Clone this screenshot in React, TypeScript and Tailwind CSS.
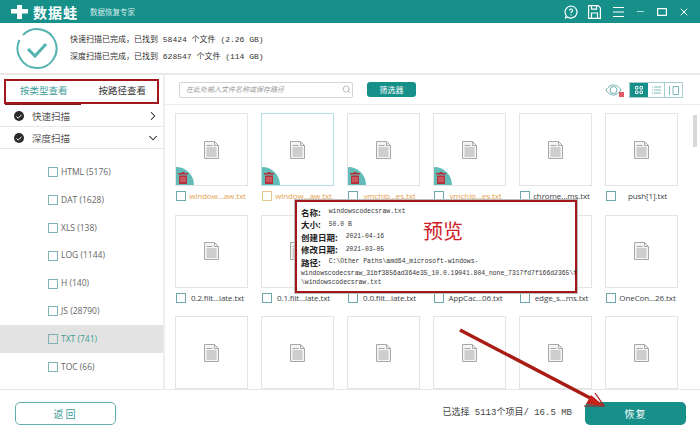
import { ChevronDown, ChevronRight, Minus, Search, X } from "lucide-react";

const cjk = "font-['Noto_Sans_CJK_SC',sans-serif]";
const mono = "font-['Liberation_Mono','Noto_Sans_CJK_SC',monospace]";

const fileTypes = ["HTML (5176)", "DAT (1628)", "XLS (138)", "LOG (1144)", "H (140)", "JS (28790)", "TXT (741)", "TOC (66)"];

const files = [
  { name: "window...aw.txt", deleted: true, selected: false },
  { name: "window...aw.txt", deleted: true, selected: true },
  { name: "vmchip...es.txt", deleted: true, selected: false },
  { name: "vmchip...es.txt", deleted: true, selected: false },
  { name: "chrome...ms.txt", deleted: false, selected: false },
  { name: "push[1].txt", deleted: false, selected: false },
  { name: "0.2.filt...iate.txt", deleted: false, selected: false },
  { name: "0.1.filt...iate.txt", deleted: false, selected: false },
  { name: "0.0.filt...iate.txt", deleted: false, selected: false },
  { name: "AppCac...06.txt", deleted: false, selected: false },
  { name: "edge_s...ms.txt", deleted: false, selected: false },
  { name: "OneCon...26.txt", deleted: false, selected: false },
  { name: "", deleted: false, selected: false },
  { name: "", deleted: false, selected: false },
  { name: "", deleted: false, selected: false },
  { name: "", deleted: false, selected: false },
  { name: "", deleted: false, selected: false },
  { name: "", deleted: false, selected: false },
];

function DocIcon() {
  return (
    <svg width="15" height="18" viewBox="0 0 15 18" fill="none" stroke="#a8a8a8">
      <path d="M.5.5h10l4 4v13H.5z" fill="#f4f4f4" />
      <path d="M10.5.5v4h4M2.500 4.500h6M2.500 7h10M2.500 9h10M2.500 11h10M2.500 13h10M2.500 15h10" />
    </svg>
  );
}

function TrashBadge() {
  return (
    <div className="absolute bottom-0 left-0 w-[18px] h-[18px] bg-[#62bdb9] rounded-tr-[18px] flex items-end pl-[2px] pb-[1px]">
      <svg width="10" height="12" viewBox="0 0 10 12" fill="#b5323c">
        <path d="M3.500 0h3v1H10v1.500H0V1h3.500zM1 3.500h8V12H1z" />
        <path d="M3 5v5M5 5v5M7 5v5" stroke="#e9a2a2" strokeWidth=".7" />
      </svg>
    </div>
  );
}

function FileCard({ name, deleted, selected }: { name: string; deleted: boolean; selected: boolean }) {
  return (
    <div className="w-[73px] shrink-0">
      <div className={`relative h-[73px] bg-white border flex items-center justify-center ${selected ? "border-[#b5dfe0]" : "border-[#e4e4e4]"}`}>
        <DocIcon />
        {deleted && <TrashBadge />}
      </div>
      <div className="flex items-center h-[14px] mt-[3px] whitespace-nowrap pl-[1px]">
        <span className={`w-[10px] h-[10px] border shrink-0 ${selected ? "border-[#e6c88c]" : "border-[#6ea8ad]"}`} />
        <span className={`flex-1 ml-[1px] text-center font-['Open_Sans',sans-serif] text-[8px] tracking-[-0.1px] ${deleted ? "text-[#e3a251]" : "text-[#3c4448]"}`}>{name}</span>
      </div>
    </div>
  );
}

function HeaderBar() {
  return (
    <header className="h-[23px] bg-[#18908a] flex items-center text-white shrink-0">
      <svg className="ml-[10px]" width="19" height="16" viewBox="0 0 19 16" fill="#fff">
        <path d="M7 1h5v4h6v4.500h-6V15H7V9.500H1V5h6z" />
      </svg>
      <span className={`ml-[4px] text-[14px] font-bold tracking-[1px] leading-none ${cjk}`}>数据蛙</span>
      <span className={`ml-[12px] text-[7.500px] text-[#d4eceb] ${cjk}`}>数据恢复专家</span>
      <div className="ml-auto flex items-center mr-[10px]">
        <svg width="14" height="14" viewBox="0 0 14 14" fill="none" stroke="#fff" strokeWidth="1.200">
          <path d="M7 1a6 6 0 1 1-3.500 10.900L1.500 13l.6-2.700A6 6 0 0 1 7 1z" />
          <path d="M5.500 5.500a1.500 1.500 0 1 1 2.300 1.300c-.6.400-.8.700-.8 1.300M7 9.500v1" />
        </svg>
        <svg className="ml-[10px]" width="13" height="14" viewBox="0 0 13 14" fill="none" stroke="#fff" strokeWidth="1.200">
          <path d="M.6.6h9.500l2.300 2.300v10.500H.6zM3.500.6v3.500h5V.6M3.500 13.400V8h6v5.400" />
        </svg>
        <svg className="ml-[12px]" width="11" height="12" viewBox="0 0 11 12" stroke="#fff" strokeWidth="1">
          <path d="M0 1.500h11M0 6h11M0 10.500h11" />
        </svg>
        <Minus className="ml-[11px]" size={11} strokeWidth={1.500} />
        <svg className="ml-[11.500px]" width="10" height="8" viewBox="0 0 10 8" fill="none" stroke="#fff" strokeWidth="1.200">
          <path d="M.6.6h8.800v6.800H.6z" />
        </svg>
        <X className="ml-[11px]" size={12} strokeWidth={2} />
      </div>
    </header>
  );
}

function ScanSummary() {
  return (
    <section className="h-[52px] flex items-center border-b-2 border-[#e9e9e9] shrink-0">
      <svg className="ml-[15px]" width="43" height="43" viewBox="0 0 43 43" fill="none" stroke="#55b3b0" strokeWidth="2">
        <path d="M8 8a19.500 19.500 0 1 1-3.500 5" />
        <path d="M13 22l7 7 11-12" strokeWidth="3" />
      </svg>
      <div className={`ml-[12px] text-[8px] leading-[17px] text-[#333] whitespace-pre ${mono}`}>
        <div>快速扫描已完成，已找到 58424 个文件 (2.26 GB)</div>
        <div>深度扫描已完成，已找到 628547 个文件 (114 GB)</div>
      </div>
    </section>
  );
}

function ViewTabs() {
  return (
    <div className="relative w-[165px] h-[30px] shrink-0 border-r-2 border-[#eeeeee] flex items-center">
      <div className={`flex text-[9.500px] pl-[20px] pt-[1px] ${cjk}`}>
        <span className="text-[#3d9c97]">按类型查看</span>
        <span className="ml-[31px] text-[#333]">按路径查看</span>
      </div>
      <div className="absolute left-[5px] bottom-0 w-[76px] h-[1px] bg-[#7d1a1a]" />
      {/* annotation frame round the tabs */}
      <div className="absolute left-[4px] top-[4px] w-[155px] h-[25px] border-2 border-[#a3161c]" />
    </div>
  );
}

function Toolbar() {
  return (
    <div className="flex-1 flex items-center border-b border-[#ececec] relative">
      <div className="ml-[14px] w-[174px] h-[16px] border border-[#d4d4d4] rounded-[2px] flex items-center justify-between pl-[6px] pr-[1px]">
        <span className={`text-[7px] italic text-[#9a9a9a] ${cjk}`}>在此处输入文件名称或保存路径</span>
        <Search size={9} className="text-[#aaa]" />
      </div>
      <button className={`ml-[14px] w-[49px] h-[15px] bg-[#18908a] rounded-[3px] text-white text-[8px] leading-none ${cjk}`}>筛选器</button>
      <svg className="absolute left-[440px] top-[9px]" width="19" height="13" viewBox="0 0 19 13" fill="none" stroke="#4f9c9c" strokeWidth=".8">
        <path d="M1 6c3-4 5-5 7.500-5S14 2 16 6c-2 3-5 5-7.500 5S3 9.500 1 6z" />
        <circle cx="8.500" cy="6" r="3.500" />
        <rect x="14" y="8" width="5" height="5" fill="#e05b64" stroke="none" />
      </svg>
      <div className="absolute left-[464px] top-[7px] w-[54px] h-[16px] flex border border-[#a8cfcf]">
        <span className="w-[18px] bg-[#18908a] flex items-center justify-center">
          <svg width="8" height="8" viewBox="0 0 8 8" fill="none" stroke="#fff" strokeWidth=".9">
            <path d="M.5.5h2.500v2.500H.5zM5 .5h2.500v2.500H5zM.5 5h2.500v2.500H.5zM5 5h2.500v2.500H5z" />
          </svg>
        </span>
        <span className="w-[17px] flex items-center justify-center border-r border-[#a8cfcf]">
          <svg width="9" height="8" viewBox="0 0 9 8" stroke="#5aa8a6" strokeWidth=".8">
            <path d="M2 1h7M2 4h7M2 7h7M0 1h1M0 4h1M0 7h1" />
          </svg>
        </span>
        <span className="flex-1 flex items-center justify-center">
          <svg width="10" height="9" viewBox="0 0 10 9" fill="none" stroke="#5aa8a6" strokeWidth=".8">
            <path d="M.5 0v9M4 .5h5.500v8H4z" />
          </svg>
        </span>
      </div>
    </div>
  );
}

function SidebarHeading({ label, open }: { label: string; open: boolean }) {
  return (
    <div className="h-[22px] flex items-center border-b border-[#e8e8e8] pl-[14px] pr-[3px] pt-[1px]">
      <span className="w-[10px] h-[10px] rounded-full bg-[#2a2a2a] flex items-center justify-center">
        <svg width="6" height="5" viewBox="0 0 6 5" fill="none" stroke="#fff" strokeWidth="1">
          <path d="M.5 2.500l1.700 1.700L5.500.7" />
        </svg>
      </span>
      <span className={`ml-[8px] text-[9.500px] text-[#555] ${cjk}`}>{label}</span>
      {open ? <ChevronDown className="ml-auto text-[#222]" size={14} strokeWidth={1.800} /> : <ChevronRight className="ml-auto text-[#222]" size={14} strokeWidth={1.800} />}
    </div>
  );
}

function Sidebar() {
  return (
    <aside className="w-[165px] shrink-0 border-r-2 border-[#eeeeee] overflow-hidden">
      <SidebarHeading label="快速扫描" open={false} />
      <SidebarHeading label="深度扫描" open />
      <div className="pt-[9.500px]">
        {fileTypes.map((type) => (
          <div key={type} className={`h-[27.800px] flex items-center pl-[48px] ${type.startsWith("TXT") ? "bg-[#e3e3e3]" : ""}`}>
            <span className="w-[10px] h-[10px] border border-[#7fb3b6]" />
            <span className={`ml-[3px] font-['Open_Sans',sans-serif] text-[8.500px] ${type.startsWith("TXT") ? "text-[#3d9c97]" : "text-[#666]"}`}>{type}</span>
          </div>
        ))}
      </div>
    </aside>
  );
}

function Detail({ label, value }: { label: string; value: string }) {
  return (
    <div className="h-[12.500px] flex items-center whitespace-pre">
      <span className={`text-[8.500px] font-bold text-[#222] ${cjk}`}>{label}</span>
      <span className={`ml-[8px] text-[6.400px] text-[#333] ${mono}`}>{value}</span>
    </div>
  );
}

function FileGrid() {
  return (
    <div className="relative flex-1 overflow-hidden">
      <div className="pl-[10px] pt-[8px] grid grid-cols-[repeat(6,73px)] gap-x-[13px] gap-y-[11.500px]">
        {files.map((file, i) => (
          <FileCard key={i} {...file} />
        ))}
      </div>
      {/* scrollbar thumb */}
      <div className="absolute right-[3px] top-[10px] w-[4px] h-[32px] bg-[#d8d8d8]" />
      {/* file details popover */}
      <div className="absolute left-[130px] top-[95px] w-[282px] h-[93px] bg-white border-2 border-[#a3161c] shadow-[0_0_0_1px_#bbbbbb] pl-[4px] pt-[4px]">
        <Detail label="名称:" value="windowscodecsraw.txt" />
        <Detail label="大小:" value="50.0 B" />
        <Detail label="创建日期:" value="2021-04-16" />
        <Detail label="修改日期:" value="2021-03-05" />
        <Detail label="路径:" value="C:\Other Paths\amd64_microsoft-windows-" />
        <p className={`text-[6.400px] leading-[9.500px] text-[#333] whitespace-pre ${mono}`}>
          windowscodecsraw_31bf3856ad364e35_10.0.19041.804_none_7317fd7f166d2365\f
          <br />
          \windowscodecsraw.txt
        </p>
        <span className={`absolute left-[126px] top-[19px] text-[20px] leading-none text-[#cf2027] ${cjk}`}>预览</span>
      </div>
    </div>
  );
}

function Footer() {
  return (
    <footer className="h-[48px] shrink-0 border-t border-[#e8e8e8] flex items-center relative">
      <button className={`ml-[15px] w-[101px] h-[23px] border border-[#62aeae] rounded-[5px] text-[#3d9c97] text-[10px] tracking-[2px] ${cjk}`}>返回</button>
      <span className={`ml-auto text-[9px] text-[#444] ${mono}`}>已选择 5113个项目/ 16.5 MB</span>
      <button className={`ml-[13px] mr-[14px] w-[101px] h-[23px] bg-[#18908a] rounded-[5px] text-white text-[10px] tracking-[1px] ${cjk}`}>恢复</button>
    </footer>
  );
}

export default function App() {
  return (
    <div className="relative w-[700px] h-[437px] bg-white overflow-hidden flex flex-col">
      <HeaderBar />
      <ScanSummary />
      <div className="h-[30px] flex shrink-0">
        <ViewTabs />
        <Toolbar />
      </div>
      <div className="flex-1 flex min-h-0">
        <Sidebar />
        <FileGrid />
      </div>
      <Footer />
      {/* annotation arrow pointing at the recover button */}
      <svg className="absolute left-0 top-0 pointer-events-none" width="700" height="437" fill="none">
        <path d="M460 330L594 400" stroke="#a81c14" strokeWidth="3.500" />
        <path d="M595 393L604 406L584 406" stroke="#a81c14" strokeWidth="1.200" />
        <path d="M591 395L604 406L586 404z" fill="#c7231b" />
      </svg>
    </div>
  );
}
